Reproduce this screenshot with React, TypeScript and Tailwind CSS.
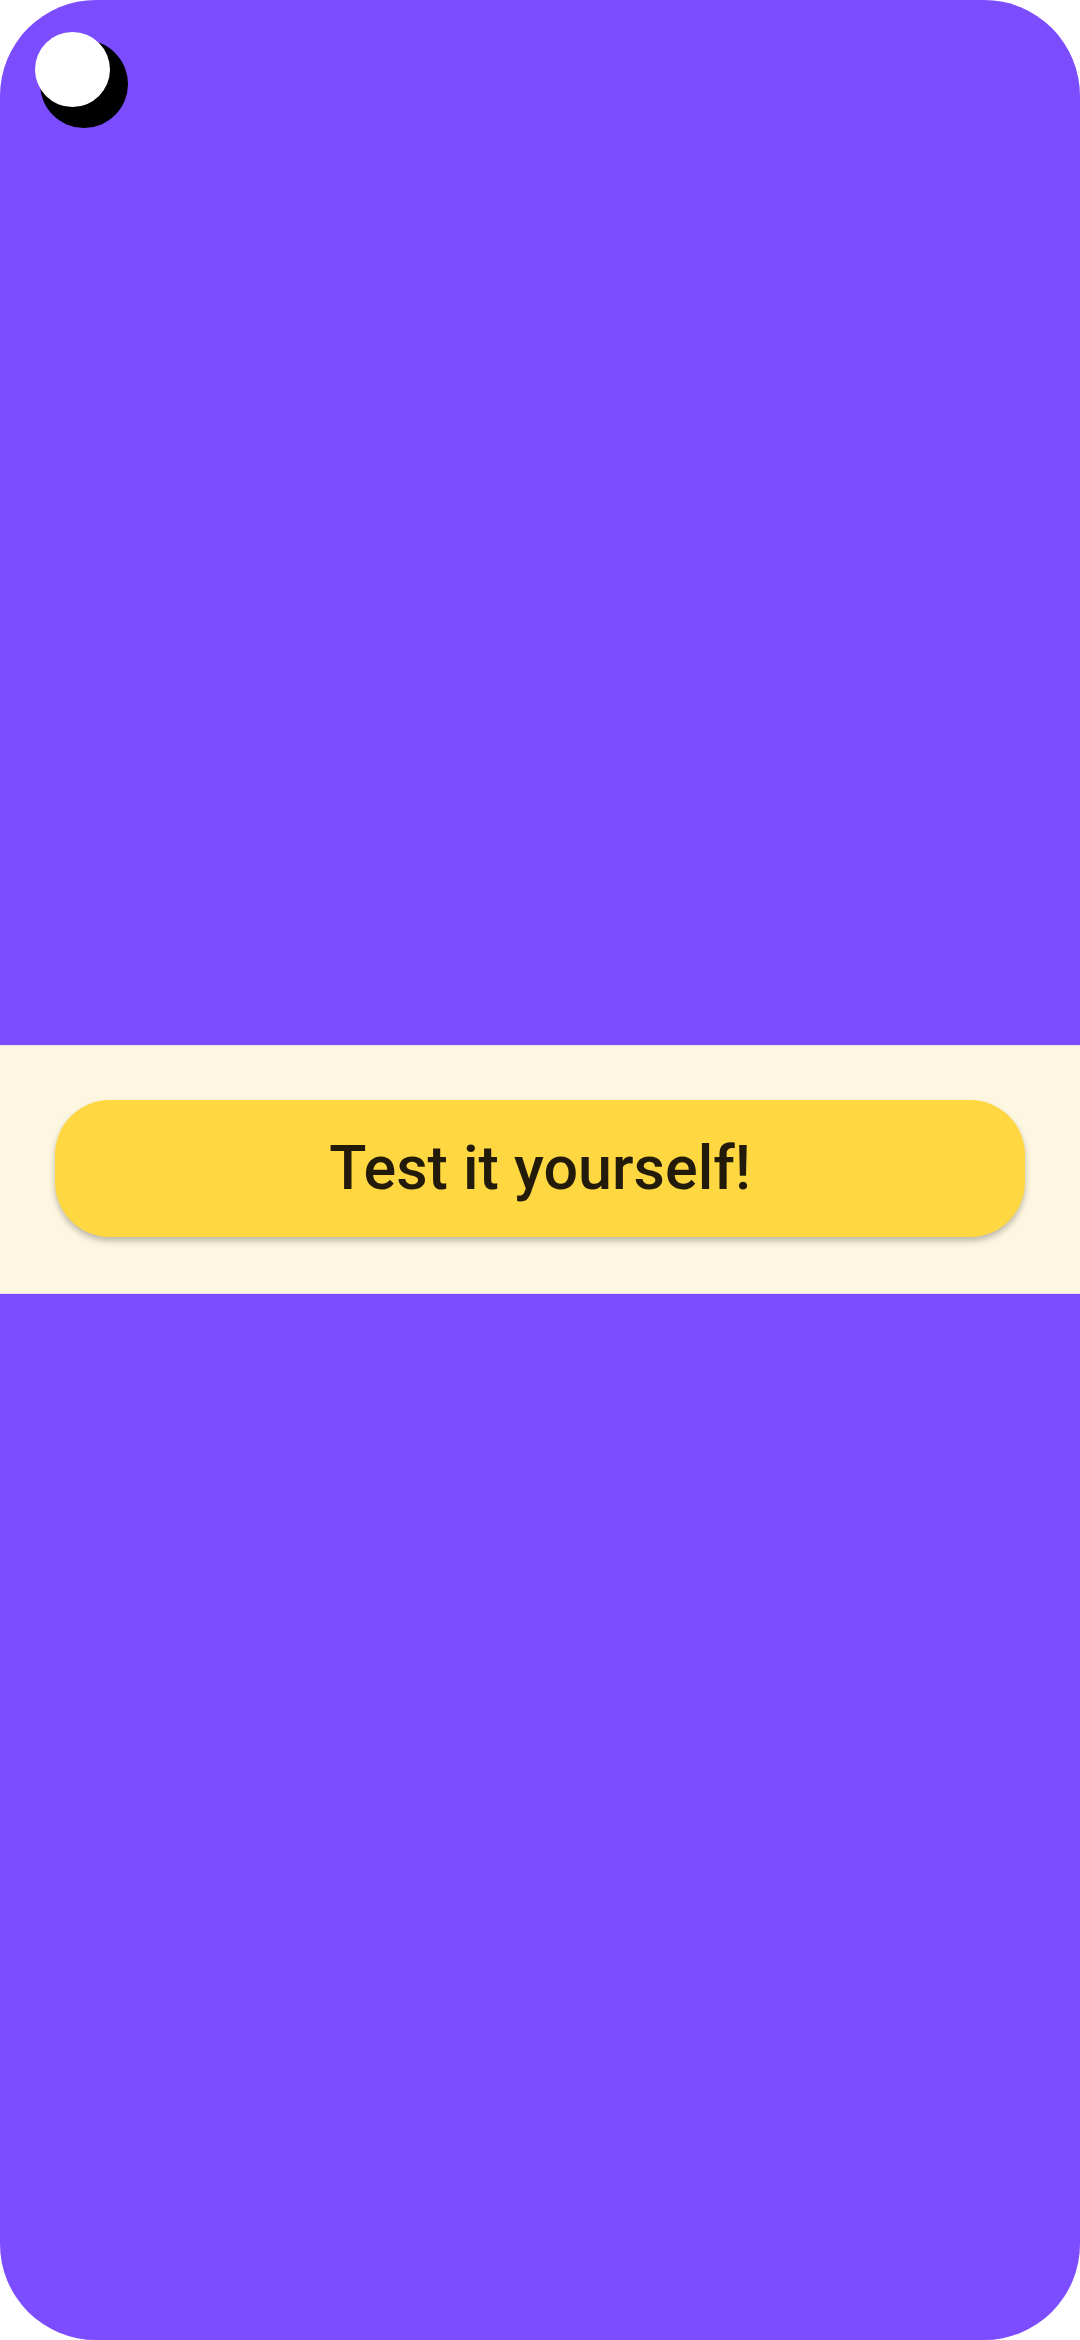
import React from "react";

export default function App() {
  return (
    <div className="w-[1080px] h-[2340px] bg-white">
      <div className="relative w-full h-full bg-[#7c4dff] rounded-[96px] overflow-hidden flex flex-col">
        {/* overlapping dots in the corner */}
        <div className="absolute left-[40px] top-[40px] w-[88px] h-[88px] rounded-full bg-black" />
        <div className="absolute left-[35px] top-[32px] w-[75px] h-[75px] rounded-full bg-white" />

        <div className="h-[1045px]" />
        <div className="h-[249px] bg-[#fdf6e0] border-y border-[#e9e2ee] px-[55px] flex items-center">
          <button className="w-full h-[137px] mt-[-3px] rounded-[55px] bg-[#ffd740] shadow-[0_4px_6px_rgba(0,0,0,0.25)] flex items-center justify-center">
            <span className="text-[61px] font-medium text-[#221b09] font-['Roboto',sans-serif] leading-none">
              Test it yourself!
            </span>
          </button>
        </div>
        <div className="flex-1" />
      </div>
    </div>
  );
}
